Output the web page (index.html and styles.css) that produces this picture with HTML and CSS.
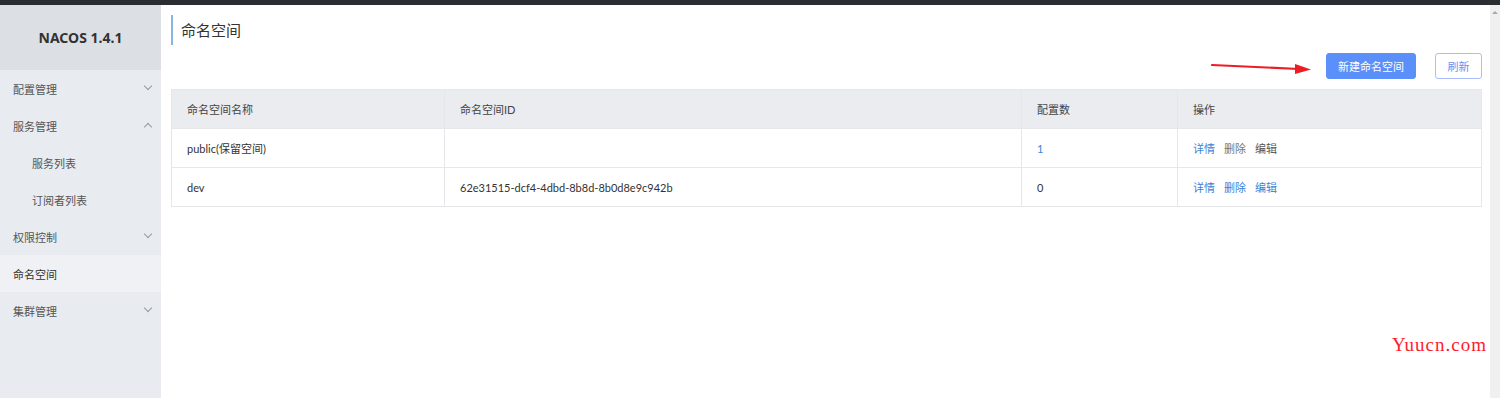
FILE: index.html
```html
<!DOCTYPE html>
<html lang="zh-CN">
<head>
  <meta charset="UTF-8">
  <title>NACOS 1.4.1 - 命名空间</title>
  <link rel="stylesheet" href="styles.css">
</head>
<body>
  <div class="topbar"></div>
  <div class="layout">
    <aside class="sidebar">
      <div class="brand">NACOS 1.4.1</div>
      <ul class="menu">
        <li class="item">配置管理<span class="chev down"></span></li>
        <li class="item">服务管理<span class="chev up"></span></li>
        <li class="item sub">服务列表</li>
        <li class="item sub">订阅者列表</li>
        <li class="item">权限控制<span class="chev down"></span></li>
        <li class="item active">命名空间</li>
        <li class="item">集群管理<span class="chev down"></span></li>
      </ul>
    </aside>

    <main class="main">
      <h2 class="title">命名空间</h2>

      <div class="toolbar">
        <svg class="arrow" width="100" height="12" viewBox="0 0 100 12">
          <line x1="1" y1="3" x2="88" y2="7" stroke="#ee1c25" stroke-width="2.2" stroke-linecap="round"/>
          <polygon points="84,2 100,7.5 84,12" fill="#ee1c25"/>
        </svg>
        <button class="btn primary">新建命名空间</button>
        <button class="btn ghost">刷新</button>
      </div>

      <table class="grid">
        <colgroup>
          <col style="width:273px">
          <col style="width:577px">
          <col style="width:156px">
          <col>
        </colgroup>
        <thead>
          <tr>
            <th>命名空间名称</th>
            <th>命名空间ID</th>
            <th>配置数</th>
            <th>操作</th>
          </tr>
        </thead>
        <tbody>
          <tr>
            <td>public(保留空间)</td>
            <td></td>
            <td><span class="link">1</span></td>
            <td class="ops"><span class="link">详情</span><span class="muted">删除</span><span class="muted dark">编辑</span></td>
          </tr>
          <tr>
            <td>dev</td>
            <td>62e31515-dcf4-4dbd-8b8d-8b0d8e9c942b</td>
            <td>0</td>
            <td class="ops"><span class="link">详情</span><span class="link">删除</span><span class="link">编辑</span></td>
          </tr>
        </tbody>
      </table>

      <div class="watermark">Yuucn.com</div>
    </main>

    <div class="scrolltrack"><span class="scrollup"></span></div>
  </div>
</body>
</html>
```

FILE: styles.css
```css
* { box-sizing: border-box; }
html, body { height: 100%; }
body {
  margin: 0;
  font-family: Lato, "Noto Sans CJK SC", sans-serif;
  font-size: 11px;
  color: #333;
  background: #fff;
  display: flex;
  flex-direction: column;
  overflow: hidden;
}
.topbar { height: 5px; background: #2a2e33; flex: none; }
.layout { flex: 1; display: flex; min-height: 0; }

.sidebar {
  width: 161px; flex: none;
  background: #e8ebef;
}
.brand {
  height: 65px;
  background: #dcdfe4;
  display: flex; align-items: center; justify-content: center;
  font-family: "Noto Sans", "Noto Sans CJK SC", sans-serif;
  font-weight: 700; font-size: 14px; color: #333;
  padding-bottom: 1px;
}
.menu { list-style: none; margin: 0; padding: 0; }
.item {
  position: relative;
  height: 37px; line-height: 39px;
  padding-left: 13px;
  color: #555;
}
.item.sub { padding-left: 32px; }
.item.active { background: #eff1f4; color: #333; }
.chev {
  position: absolute; right: 10px; top: 15px;
  width: 6px; height: 6px;
  border-right: 1px solid #999; border-bottom: 1px solid #999;
}
.chev.down { transform: rotate(45deg); top: 13px; }
.chev.up { transform: rotate(-135deg); top: 17px; }

.main {
  flex: 1; position: relative;
  padding: 10px 8px 0 10px;
}
.title {
  margin: 0;
  height: 30px; line-height: 31px;
  padding-left: 8px;
  border-left: 2px solid #8ab5df;
  font-size: 15px; font-weight: 400; color: #333;
}
.toolbar {
  display: flex; justify-content: flex-end; align-items: center;
  margin-top: 8px; height: 26px;
}
.arrow { margin-right: 15px; margin-top: 4px; }
.btn {
  height: 26px; padding: 0;
  font-family: inherit; font-size: 11px;
  border-radius: 3px; cursor: pointer;
}
.btn.primary { width: 90px; background: #5b8ff9; border: 1px solid #5b8ff9; color: #fff; }
.btn.ghost { margin-left: 19px; width: 47px; background: #fff; border: 1px solid #a9befa; color: #6e90f0; }

.grid {
  width: 100%; margin-top: 10px;
  border-collapse: collapse; table-layout: fixed;
  border: 1px solid #e6e7eb;
}
.grid th, .grid td {
  height: 39px; padding: 0 15px;
  text-align: left; font-weight: 400;
  border: 1px solid #e6e7eb;
  white-space: nowrap;
}
.grid th { background: #ebecf0; color: #444; }
.link { color: #3d82d9; }
.muted { color: #777; }
.muted.dark { color: #555; }
.ops span { margin-right: 9px; }

.watermark {
  position: absolute; right: 3px; top: 329px;
  font-family: "Liberation Serif", serif;
  font-size: 19px; color: #ff1a2e; letter-spacing: 1px;
}

.scrolltrack {
  width: 10px; flex: none; background: #f0f0f0; position: relative;
}
.scrollup {
  position: absolute; left: 2px; top: 6px;
  border-left: 3px solid transparent; border-right: 3px solid transparent;
  border-bottom: 3px solid #aaa;
}
```
